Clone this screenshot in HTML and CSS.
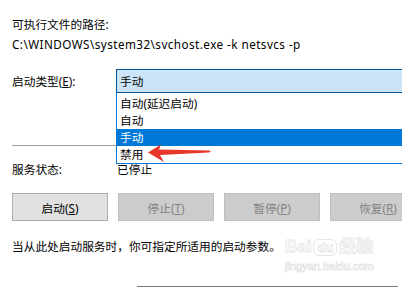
FILE: index.html
```html
<!DOCTYPE html>
<html lang="zh-CN">
<head>
  <meta charset="UTF-8">
  <title>服务属性</title>
  <link rel="stylesheet" href="styles.css">
</head>
<body>

  <div class="path-block">
    <div class="line">可执行文件的路径:</div>
    <div class="line path">C:\WINDOWS\system32\svchost.exe -k netsvcs -p</div>
  </div>

  <div class="row type-row">
    <div class="label">启动类型(<u>E</u>):</div>
    <div class="combo">
      <div class="combo-value">手动</div>
      <ul class="combo-list">
        <li>自动(延迟启动)</li>
        <li>自动</li>
        <li class="selected">手动</li>
        <li>禁用</li>
      </ul>
      <svg class="arrow" width="70" height="24" viewBox="0 0 70 24">
        <polygon points="2,10.5 15,2.5 13,7.5 63,8.6 65,9.5 63,10.4 14,13 18,20" fill="#e8362b"/>
      </svg>
    </div>
  </div>

  <div class="separator"></div>

  <div class="row status-row">
    <div class="label">服务状态:</div>
    <div class="value">已停止</div>
  </div>

  <div class="buttons">
    <button class="btn">启动(<u>S</u>)</button>
    <button class="btn" disabled>停止(<u>T</u>)</button>
    <button class="btn" disabled>暂停(<u>P</u>)</button>
    <button class="btn" disabled>恢复(<u>R</u>)</button>
  </div>

  <p class="hint">当从此处启动服务时，你可指定所适用的启动参数。</p>

  <div class="param-box"></div>

  <div class="watermark">
    <div class="wm-logo">Bai<span class="wm-du">du</span>经验</div>
    <div class="wm-url">jingyan.baidu.com</div>
  </div>

</body>
</html>
```

FILE: styles.css
```css
html, body {
  margin: 0;
  overflow: hidden;
}
body {
  font-family: "Noto Sans", "Noto Sans CJK SC", sans-serif;
  font-size: 11.7px;
  color: #000;
  background: #fff;
  padding: 16px 0 0 12px;
  width: 390px;
  height: 271px;
  position: relative;
}
.line {
  height: 16px;
  line-height: 16px;
  white-space: nowrap;
}
.path-block .line + .line {
  margin-top: 4px;
}
.path {
  letter-spacing: 0.45px;
}
.row {
  display: grid;
  grid-template-columns: 104px 1fr;
  align-items: center;
}
.label, .value {
  line-height: 16px;
  white-space: nowrap;
}
.type-row {
  margin-top: 17px;
}
.combo {
  position: relative;
  width: 287px;
}
.combo-value {
  height: 22px;
  line-height: 22px;
  padding-left: 3px;
  background: #cce4f7;
  border: 1px solid #005499;
}
.combo-list {
  position: absolute;
  left: 0;
  top: 24px;
  width: 285px;
  margin: 0;
  padding: 2px 0 0;
  list-style: none;
  background: #fff;
  border: 1px solid #0078d7;
  border-top: none;
  z-index: 2;
}
.combo-list li {
  height: 17px;
  line-height: 17px;
  padding-left: 3px;
}
.combo-list .selected {
  background: #0078d7;
  color: #fff;
}
.arrow {
  position: absolute;
  left: 30px;
  top: 73px;
  z-index: 3;
}
.separator {
  margin-top: 52px;
  height: 1px;
  background: #a0a0a0;
  width: 200px;
}
.status-row {
  margin-top: 15px;
}
.value {
  padding-left: 1px;
}
.buttons {
  display: flex;
  gap: 10px;
  margin-top: 16px;
  overflow: hidden;
}
.btn {
  flex: none;
  width: 96px;
  height: 28px;
  font: inherit;
  color: #000;
  background: #e1e1e1;
  border: 1px solid #adadad;
  padding: 0;
}
.btn:disabled {
  background: #cccccc;
  border-color: #bfbfbf;
  color: #838383;
}
.hint {
  margin: 17px 0 0;
  line-height: 16px;
  white-space: nowrap;
}
.param-box {
  margin: 32px 0 0 125px;
  width: 261px;
  height: 1px;
  background: #7a7a7a;
}
.watermark {
  position: absolute;
  left: 285px;
  top: 234px;
  color: transparent;
  -webkit-text-stroke: 0.8px #e6e6e6;
  font-family: "Liberation Sans", "Noto Sans CJK SC", sans-serif;
}
.wm-logo {
  font-size: 17px;
  font-weight: bold;
  line-height: 26px;
  white-space: nowrap;
}
.wm-du {
  display: inline-block;
  font-size: 13px;
  line-height: 15px;
  padding: 0 3px;
  margin: 0 2px;
  border: 1px solid #e6e6e6;
  border-radius: 6px;
}
.wm-url {
  font-size: 11px;
  line-height: 12px;
  white-space: nowrap;
}
```
